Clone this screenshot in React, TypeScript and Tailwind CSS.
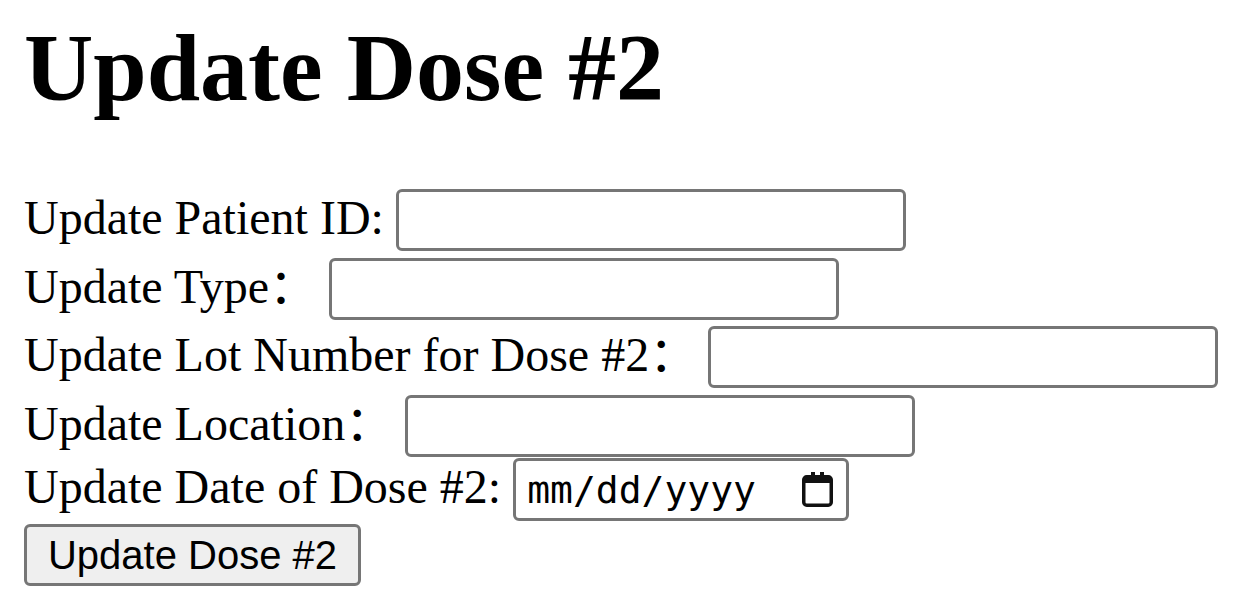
import React from "react";

function Field({ w = "w-[510px]" }: { w?: string }) {
  return (
    <div
      className={`${w} h-[62px] shrink-0 rounded-[6px] border-[3px] border-[#767676] bg-white`}
    />
  );
}

function Label({ text, cjk }: { text: string; cjk?: boolean }) {
  return (
    <span className="mt-[2px] whitespace-nowrap text-[48px] leading-[53px] text-black font-['Liberation_Serif',serif]">
      {text}
      {cjk ? (
        <span className="leading-[40px] font-['Noto_Sans_CJK_SC',sans-serif]">：</span>
      ) : null}
    </span>
  );
}

function CalendarIcon() {
  return (
    <svg width="31" height="35" viewBox="0 0 31 35" className="shrink-0">
      <rect x="9" y="0" width="4" height="6" fill="#111" />
      <rect x="18" y="0" width="4" height="6" fill="#111" />
      <rect x="1.75" y="4.75" width="27.5" height="28.5" rx="3" fill="none" stroke="#111" strokeWidth="3.5" />
      <rect x="2" y="5" width="27" height="6" fill="#111" />
    </svg>
  );
}

export default function App() {
  return (
    <div className="min-h-screen bg-white pl-[24px] pt-[15px] text-black">
      <h1 className="text-[96px] font-bold leading-[106px] font-['Liberation_Serif',serif]">
        Update Dose #2
      </h1>
      <div className="mt-[68px] flex flex-col">
        <div className="flex items-start gap-[12px]">
          <Label text="Update Patient ID:" />
          <Field />
        </div>
        <div className="mt-[7px] flex items-start gap-[12px]">
          <Label text="Update Type" cjk />
          <Field />
        </div>
        <div className="mt-[6px] flex items-start gap-[11px]">
          <Label text="Update Lot Number for Dose #2" cjk />
          <Field />
        </div>
        <div className="mt-[7px] flex items-start gap-[12px]">
          <Label text="Update Location" cjk />
          <Field />
        </div>
        <div className="mt-[1px] flex items-start gap-[12px]">
          <Label text="Update Date of Dose #2:" />
          <div className="flex h-[63px] w-[336px] shrink-0 items-center rounded-[6px] border-[3px] border-[#767676] bg-white pl-[11px] pr-[13px]">
            <span className="text-[38px] leading-none text-black font-['DejaVu_Sans_Mono',monospace]">
              mm/dd/yyyy
            </span>
            <div className="flex-1" />
            <CalendarIcon />
          </div>
        </div>
        <div className="mt-[3px] flex">
          <button className="flex h-[62px] w-[337px] items-center justify-center rounded-[6px] border-[3px] border-[#767676] bg-[#efefef] text-[40px] leading-none text-black font-['Liberation_Sans',Arial,sans-serif]">
            Update Dose #2
          </button>
        </div>
      </div>
    </div>
  );
}
